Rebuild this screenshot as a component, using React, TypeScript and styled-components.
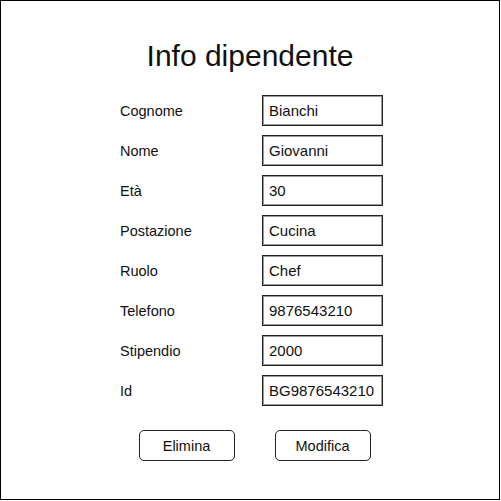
import styled, { createGlobalStyle } from 'styled-components'

const GlobalStyle = createGlobalStyle`
  html, body {
    margin: 0;
    padding: 0;
    background: #fff;
  }
  body {
    font-family: "Liberation Sans", Arial, sans-serif;
    color: #111;
  }
`

interface Field {
  label: string
  value: string
}

const fields: Field[] = [
  { label: 'Cognome', value: 'Bianchi' },
  { label: 'Nome', value: 'Giovanni' },
  { label: 'Età', value: '30' },
  { label: 'Postazione', value: 'Cucina' },
  { label: 'Ruolo', value: 'Chef' },
  { label: 'Telefono', value: '9876543210' },
  { label: 'Stipendio', value: '2000' },
  { label: 'Id', value: 'BG9876543210' },
]

export default function App() {
  return (
    <>
      <GlobalStyle />
      <Frame>
        <Title>Info dipendente</Title>
        <Form>
          {fields.map((f) => (
            <Row key={f.label}>
              <Label>{f.label}</Label>
              <ValueBox>{f.value}</ValueBox>
            </Row>
          ))}
        </Form>
        <Actions>
          <ActionButton type="button">Elimina</ActionButton>
          <ActionButton type="button">Modifica</ActionButton>
        </Actions>
      </Frame>
    </>
  )
}

const Frame = styled.div`
  box-sizing: border-box;
  width: 500px;
  height: 500px;
  border: 1px solid #000;
  padding-top: 38px;
  display: flex;
  flex-direction: column;
`

const Title = styled.h1`
  margin: 0;
  align-self: center;
  font-size: 30px;
  line-height: 34px;
  font-weight: 400;
`

const Form = styled.div`
  margin: 22px 0 0 119px;
  display: grid;
  grid-template-columns: 142px 121px;
  grid-auto-rows: 31px;
  row-gap: 9px;
`

const Row = styled.div`
  display: contents;
`

const Label = styled.span`
  font-size: 14.5px;
  line-height: 29px;
  padding-top: 2px;
`

const ValueBox = styled.div`
  box-sizing: border-box;
  height: 31px;
  border: 1px solid #222;
  box-shadow: inset 0 0 0 1px #9a9a9a;
  padding-left: 6px;
  font-size: 15px;
  line-height: 29px;
  white-space: nowrap;
  overflow: hidden;
`

const Actions = styled.div`
  margin: 24px 0 0 9px;
  display: flex;
  justify-content: center;
  gap: 40px;
`

const ActionButton = styled.button`
  box-sizing: border-box;
  width: 96px;
  height: 31px;
  border: 1px solid #222;
  border-radius: 5px;
  background: #fff;
  font-family: "Liberation Sans", Arial, sans-serif;
  font-size: 14.5px;
  color: #111;
  padding: 0;
`
